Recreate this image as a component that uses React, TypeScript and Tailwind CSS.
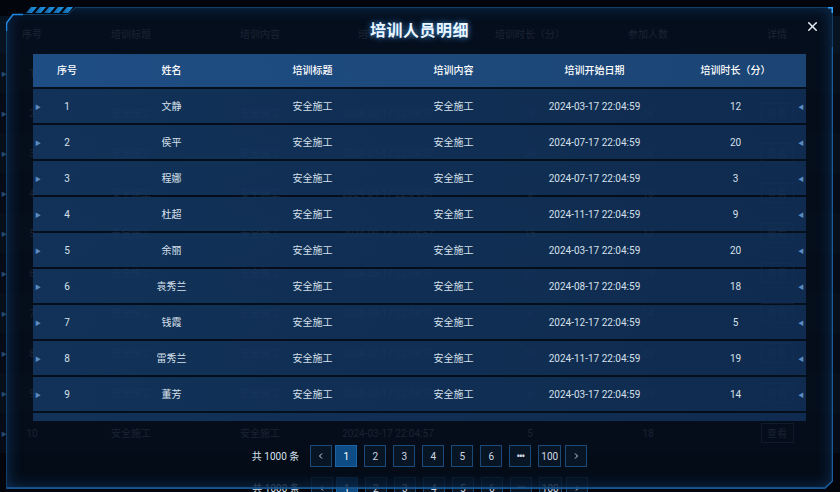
import { X } from 'lucide-react';

const FONT = "font-['Roboto','Noto_Sans_CJK_SC',sans-serif]";

// ── data ─────────────────────────────────────────────
const people = [
    { name: '文静', date: '2024-03-17 22:04:59', dur: 12 },
    { name: '侯平', date: '2024-07-17 22:04:59', dur: 20 },
    { name: '程娜', date: '2024-07-17 22:04:59', dur: 3 },
    { name: '杜超', date: '2024-11-17 22:04:59', dur: 9 },
    { name: '余丽', date: '2024-03-17 22:04:59', dur: 20 },
    { name: '袁秀兰', date: '2024-08-17 22:04:59', dur: 18 },
    { name: '钱霞', date: '2024-12-17 22:04:59', dur: 5 },
    { name: '雷秀兰', date: '2024-11-17 22:04:59', dur: 19 },
    { name: '董芳', date: '2024-03-17 22:04:59', dur: 14 },
    { name: '石磊', date: '2024-05-17 22:04:59', dur: 7 },
];

const trainings = [
    { date: '2024-01-17 22:04:57', dur: 4, count: 28 },
    { date: '2024-02-17 22:04:57', dur: 18, count: 16 },
    { date: '2024-01-17 22:04:57', dur: 24, count: 16 },
    { date: '2024-04-17 22:04:57', dur: 5, count: 15 },
    { date: '2024-09-17 22:04:57', dur: 15, count: 12 },
    { date: '2024-05-17 22:04:57', dur: 21, count: 13 },
    { date: '2024-08-17 22:04:57', dur: 4, count: 14 },
    { date: '2024-07-17 22:04:57', dur: 19, count: 20 },
    { date: '2024-02-17 22:04:57', dur: 5, count: 25 },
    { date: '2024-03-17 22:04:57', dur: 5, count: 18 },
];

const bgCols = 'grid grid-cols-[64px_134px_124px_132px_152px_84px_1fr] items-center text-center';

export default function App() {
    return (
        <div className={`relative w-[840px] h-[492px] overflow-hidden bg-[#02060c] ${FONT}`}>
            {/* ── Background page (behind the dialog) ───────── */}
            <div className="flex flex-col pt-[16px] text-[10px] text-[#66798f]">
                <div className={`${bgCols} h-[37px] bg-[#081321]`}>
                    <span>序号</span>
                    <span>培训标题</span>
                    <span>培训内容</span>
                    <span>培训开始日期</span>
                    <span>培训时长（分）</span>
                    <span>参加人数</span>
                    <span className="pl-[24px]">详情</span>
                </div>
                {trainings.map((t, i) => (
                    <div key={i} className={`${bgCols} relative h-[40px] ${i % 2 ? 'bg-[#050c17]' : 'bg-[#070f1b]'}`}>
                        <span className="absolute left-[1px] text-[6px] text-[#24496e]">▶</span>
                        <span>{i + 1}</span>
                        <span>安全施工</span>
                        <span>安全施工</span>
                        <span>{t.date}</span>
                        <span>{t.dur}</span>
                        <span>{t.count}</span>
                        <span className="flex justify-center pl-[24px]">
                            <span className="w-[33px] h-[20px] border border-[#34506e] flex items-center justify-center">查看</span>
                        </span>
                    </div>
                ))}
                <div className="mt-[24px]">
                    <Pager />
                </div>
            </div>

            {/* ── Dialog ─────────────────────────────────────── */}
            <div className="absolute left-[6px] top-[7px] w-[827px] h-[482px]">
                <div className="absolute inset-0 bg-[#050e1b]/80 shadow-[inset_0_0_16px_rgba(30,120,210,0.4)] [clip-path:polygon(0_16px,7px_7px,62px_7px,69px_0,827px_0,827px_474px,819px_482px,0_482px)]" />
                <Frame />

                <div className="relative flex flex-col px-[27px]">
                    <div className="h-[47px] flex items-center justify-center">
                        <h1 className="text-[16px] font-bold text-[#eaf6ff] tracking-[0.5px] [text-shadow:0_0_6px_rgba(70,165,255,0.9)]">
                            培训人员明细
                        </h1>
                    </div>

                    <div className="h-[367px] overflow-hidden flex flex-col gap-[2px] text-[10px]">
                        <div className="grid grid-cols-[68px_repeat(5,1fr)] items-center text-center h-[33px] shrink-0 bg-gradient-to-r from-[#20518a]/95 to-[#1c4778]/95 text-white font-medium">
                            <span>序号</span>
                            <span>姓名</span>
                            <span>培训标题</span>
                            <span>培训内容</span>
                            <span>培训开始日期</span>
                            <span>培训时长（分）</span>
                        </div>
                        {people.map((p, i) => (
                            <div
                                key={i}
                                className="relative grid grid-cols-[68px_repeat(5,1fr)] items-center text-center h-[34px] shrink-0 bg-gradient-to-r from-[#153b68]/80 to-[#12325c]/80 text-[#d6e0eb]"
                            >
                                <span className="absolute left-[2px] top-1/2 -translate-y-1/2 text-[6px] text-[#5b8cc0]">▶</span>
                                <span className="absolute right-[2px] top-1/2 -translate-y-1/2 text-[6px] text-[#5b8cc0]">◀</span>
                                <span>{i + 1}</span>
                                <span>{p.name}</span>
                                <span>安全施工</span>
                                <span>安全施工</span>
                                <span>{p.date}</span>
                                <span>{p.dur}</span>
                            </div>
                        ))}
                    </div>

                    <div className="mt-[24px]">
                        <Pager />
                    </div>
                </div>

                <button className="absolute right-[13px] top-[12px] text-[#e8eef5]">
                    <X size={15} strokeWidth={2.4} />
                </button>
            </div>
        </div>
    );
}

// ── Pagination ────────────────────────────────────────

function Pager() {
    const btn = 'h-[22px] min-w-[22px] px-[2px] flex items-center justify-center border text-[10px]';
    const normal = `${btn} border-[#1b4a78] bg-[#081525] text-[#cfd9e4]`;
    return (
        <div className="flex items-center justify-center gap-[7px] text-[10px] text-[#d6e0eb]">
            <span className="mr-[4px]">共 1000 条</span>
            <span className={`${normal} mr-[-4px]`}>
                <svg width="8" height="8" viewBox="0 0 8 8" fill="none" stroke="currentColor" strokeWidth="1">
                    <path d="M5 1.5 2.5 4 5 6.5" />
                </svg>
            </span>
            <span className={`${btn} border-[#1d64a6] bg-[#0e4c86] text-white`}>1</span>
            {[2, 3, 4, 5, 6].map((n) => (
                <span key={n} className={normal}>{n}</span>
            ))}
            <span className={`${normal} tracking-[-1px] font-bold`}>•••</span>
            <span className={normal}>100</span>
            <span className={`${normal} ml-[-3px]`}>
                <svg width="8" height="8" viewBox="0 0 8 8" fill="none" stroke="currentColor" strokeWidth="1">
                    <path d="M3 1.5 5.5 4 3 6.5" />
                </svg>
            </span>
        </div>
    );
}

// ── Dialog frame decoration ───────────────────────────

function Frame() {
    return (
        <svg className="absolute inset-0 pointer-events-none" width="827" height="482" viewBox="0 0 827 482">
            <defs>
                <linearGradient id="leftEdge" x1="0" y1="0" x2="0" y2="1">
                    <stop offset="0" stopColor="#2390e8" />
                    <stop offset="0.15" stopColor="#15588f" />
                    <stop offset="1" stopColor="#1a5c99" />
                </linearGradient>
                <linearGradient id="stripes" x1="0" y1="0" x2="1" y2="0">
                    <stop offset="0" stopColor="#135f9c" />
                    <stop offset="1" stopColor="#1d9cf2" />
                </linearGradient>
            </defs>
            {/* outline */}
            <path
                d="M0.5 16 L7 7.5 L62 7.5 L69 0.5 L826.5 0.5 L826.5 474 L819 481.5 L0.5 481.5 Z"
                fill="none"
                stroke="#123f68"
                strokeWidth="1"
            />
            <path d="M0.5 16 V481.5" stroke="url(#leftEdge)" strokeWidth="1.5" />
            <path d="M0.5 24 V16 L7 7.5 H17" fill="none" stroke="#1f8ae6" strokeWidth="1.5" />
            <path d="M0.5 481 H819 L826.5 474 V40" fill="none" stroke="#1b5d9c" strokeWidth="1.5" />
            <path d="M822 0.75 H826.25 V6" fill="none" stroke="#2aa2ff" strokeWidth="1.5" />
            <g fill="url(#stripes)">
                {[0, 1, 2, 3, 4].map((k) => {
                    const x = 20 + k * 9;
                    return <polygon key={k} points={`${x + 5},0 ${x + 11},0 ${x + 6},6 ${x},6`} />;
                })}
            </g>
        </svg>
    );
}
